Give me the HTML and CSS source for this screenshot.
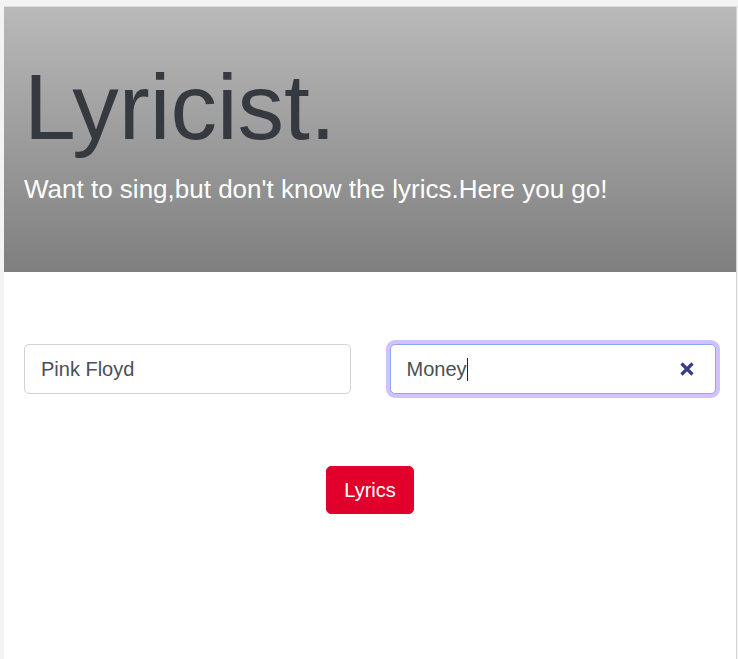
FILE: index.html
```html
<!DOCTYPE html>
<html lang="en">
<head>
<meta charset="utf-8">
<title>Lyricist.</title>
<link rel="stylesheet" href="styles.css">
</head>
<body>
<div class="frame">
  <header class="hero">
    <h1 class="hero-title">Lyricist.</h1>
    <p class="hero-lead">Want to sing,but don't know the lyrics.Here you go!</p>
  </header>
  <main class="search">
    <div class="fields">
      <div class="field"><span class="field-text">Pink Floyd</span></div>
      <div class="field field-focus">
        <span class="field-text">Money</span><span class="caret"></span>
        <svg class="clear" width="14" height="14" viewBox="0 0 14 14" aria-hidden="true">
          <path d="M1.5 1.5 L12.5 12.5 M12.5 1.5 L1.5 12.5" stroke="#3b3b8c" stroke-width="3.2" stroke-linecap="butt" fill="none"/>
        </svg>
      </div>
    </div>
    <div class="actions">
      <button class="btn-lyrics" type="button">Lyrics</button>
    </div>
  </main>
</div>
</body>
</html>
```

FILE: styles.css
```css
html, body {
  margin: 0;
  padding: 0;
}

body {
  background: #f3f3f3;
  font-family: "Liberation Sans", Arial, sans-serif;
  height: 659px;
  overflow: hidden;
}

.frame {
  box-sizing: border-box;
  margin: 6px 0 0 4px;
  width: 733px;
  height: 653px;
  background: #ffffff;
  border-top: 1px solid #dcdcdc;
  border-right: 1px solid #d6d6d6;
}

.hero {
  background: linear-gradient(to bottom, #b9b9b9 0%, #7f7f7f 100%);
  padding: 45px 20px 63px;
}

.hero-title {
  margin: 0;
  font-size: 93px;
  line-height: 110px;
  font-weight: 400;
  color: #343a40;
}

.hero-lead {
  margin: 8px 0 0;
  font-size: 26px;
  line-height: 39px;
  color: #ffffff;
}

.search {
  padding: 72px 20px 0;
}

.fields {
  display: grid;
  grid-template-columns: 1fr 1fr;
  column-gap: 39px;
}

.field {
  box-sizing: border-box;
  height: 50px;
  display: flex;
  align-items: center;
  padding: 0 16px;
  border: 1px solid #ced4da;
  border-radius: 5px;
  background: #ffffff;
  font-size: 20px;
  color: #495057;
}

.field-focus {
  border-color: #8aa6f6;
  box-shadow: 0 0 0 4px #d2c1ff;
}

.caret {
  display: inline-block;
  width: 1px;
  height: 23px;
  background: #222;
}

.clear {
  margin-left: auto;
  margin-right: 5px;
  display: block;
}

.actions {
  display: flex;
  justify-content: center;
  margin-top: 72px;
}

.btn-lyrics {
  box-sizing: border-box;
  height: 48px;
  width: 88px;
  padding: 0;
  border: 1px solid #e0002b;
  border-radius: 5px;
  background: #e0002b;
  color: #ffffff;
  font-family: "Liberation Sans", Arial, sans-serif;
  font-size: 20px;
  line-height: 30px;
}
```
